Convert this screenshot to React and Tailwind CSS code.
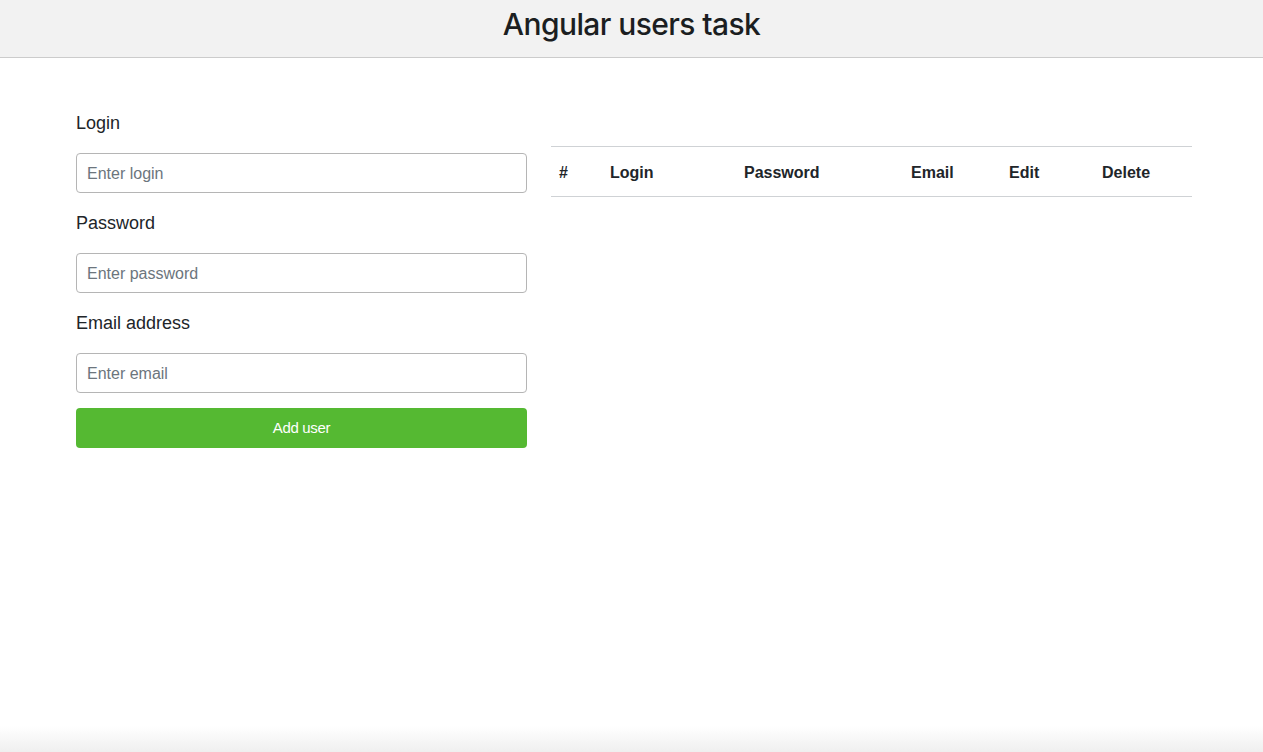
import { useState } from 'react'

const COLUMNS = [
  { label: '#', width: 'w-[51px]' },
  { label: 'Login', width: 'w-[134px]' },
  { label: 'Password', width: 'w-[167px]' },
  { label: 'Email', width: 'w-[98px]' },
  { label: 'Edit', width: 'w-[93px]' },
  { label: 'Delete', width: 'w-[98px]' }
]

function Field({ label, placeholder, type = 'text', value, onChange }) {
  return (
    <div className="mb-[17px]">
      <label className="block h-[27px] mb-4 text-[18px] leading-[27px] text-[#212529]">{label}</label>
      <input
        type={type}
        value={value}
        onChange={e => onChange(e.target.value)}
        placeholder={placeholder}
        className="block w-full h-10 px-[10px] pt-[2px] rounded-[4px] border border-[#b5b5b5] bg-white text-[16px] text-[#212529] placeholder:text-[#6c757d] outline-none"
      />
    </div>
  )
}

export default function App() {
  const [form, setForm] = useState({ login: '', password: '', email: '' })
  const [users, setUsers] = useState([])

  const set = key => val => setForm(f => ({ ...f, [key]: val }))

  const addUser = () => {
    if (!form.login) return
    setUsers(u => [...u, form])
    setForm({ login: '', password: '', email: '' })
  }

  return (
    <div className="h-screen flex flex-col bg-white font-['Liberation_Sans',Arial,sans-serif]">
      {/* Header */}
      <header className="h-[58px] bg-[#f2f2f2] border-b border-[#cccccc] flex items-center justify-center">
        <h1 className="font-['Inter',sans-serif] text-[30px] font-medium text-[#1b1e21] tracking-[-0.6px] -mt-[9px]">Angular users task</h1>
      </header>

      {/* Content */}
      <main className="flex-1 pt-[52px]">
        <div className="w-[1116px] ml-[76px] flex gap-6 items-start">
          <div className="w-[451px]">
            <Field label="Login" placeholder="Enter login" value={form.login} onChange={set('login')} />
            <Field label="Password" placeholder="Enter password" type="password" value={form.password} onChange={set('password')} />
            <Field label="Email address" placeholder="Enter email" type="email" value={form.email} onChange={set('email')} />
            <button
              onClick={addUser}
              className="-mt-[2px] w-full h-10 rounded-[4px] bg-[#55b932] text-white text-[15px] font-light tracking-[-0.3px]"
            >
              Add user
            </button>
          </div>

          <div className="flex-1 mt-9">
            <table className="w-full border-collapse text-[16px] text-[#212529]">
              <thead>
                <tr className="h-[50px] border-t border-b border-[#cfd2d5]">
                  {COLUMNS.map(c => (
                    <th key={c.label} className={`${c.width} px-2 pt-[2px] text-left font-bold`}>{c.label}</th>
                  ))}
                </tr>
              </thead>
              <tbody>
                {users.map((u, i) => (
                  <tr key={i} className="h-[49px] border-b border-[#dee2e6]">
                    <td className="px-2">{i + 1}</td>
                    <td className="px-2">{u.login}</td>
                    <td className="px-2">{u.password}</td>
                    <td className="px-2">{u.email}</td>
                    <td className="px-2">Edit</td>
                    <td className="px-2">Delete</td>
                  </tr>
                ))}
              </tbody>
            </table>
          </div>
        </div>
      </main>

      {/* Footer shade */}
      <footer className="h-[26px] bg-gradient-to-b from-white to-[#efefef]" />
    </div>
  )
}
